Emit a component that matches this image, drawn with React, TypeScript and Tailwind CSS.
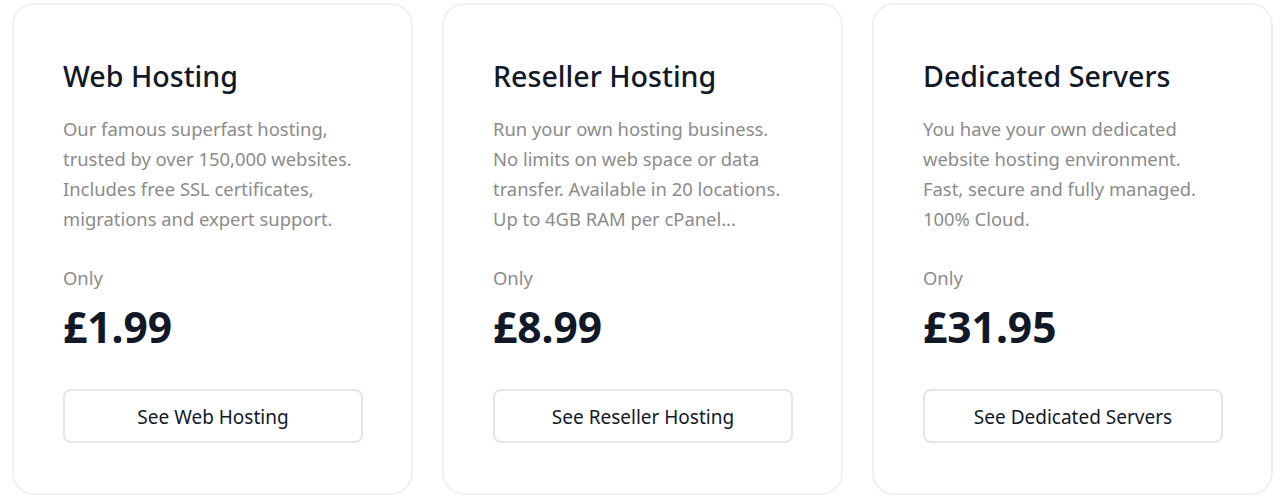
const plans = [
  {
    title: "Web Hosting",
    lines: [
      "Our famous superfast hosting,",
      "trusted by over 150,000 websites.",
      "Includes free SSL certificates,",
      "migrations and expert support.",
    ],
    price: "£1.99",
    cta: "See Web Hosting",
  },
  {
    title: "Reseller Hosting",
    lines: [
      "Run your own hosting business.",
      "No limits on web space or data",
      "transfer. Available in 20 locations.",
      "Up to 4GB RAM per cPanel...",
    ],
    price: "£8.99",
    cta: "See Reseller Hosting",
  },
  {
    title: "Dedicated Servers",
    lines: [
      "You have your own dedicated",
      "website hosting environment.",
      "Fast, secure and fully managed.",
      "100% Cloud.",
    ],
    price: "£31.95",
    cta: "See Dedicated Servers",
  },
];

const App = () => {
  return (
    <div className="min-h-[497px] bg-white pt-[3px] pl-3 pr-[10px] font-['Noto_Sans',sans-serif]">
      <div className="grid grid-cols-3 gap-[29px]">
        {plans.map((plan) => (
          <div
            key={plan.title}
            className="h-[492px] rounded-[22px] border-2 border-[#f0f0f0] px-[49px] pt-[51px]"
          >
            {/* title */}
            <h2 className="text-[28.6px] leading-[40px] font-medium text-[#111827]">
              {plan.title}
            </h2>
            <p className="mt-[18px] text-[18.4px] leading-[30px] text-[#8b8b8b]">
              {plan.lines.map((l) => (
                <span key={l} className="block">
                  {l}
                </span>
              ))}
            </p>
            <p className="mt-[30px] text-[18.4px] leading-[28px] text-[#8b8b8b]">Only</p>
            {/* price */}
            <p className="mt-[10px] text-[42.5px] leading-[50px] font-bold text-[#111827]">
              {plan.price}
            </p>
            <button className="mt-[37px] h-[54px] w-[300px] rounded-[8px] border-2 border-[#e6e6e6] bg-white pt-[2px] text-[19px] text-[#111827]">
              {plan.cta}
            </button>
          </div>
        ))}
      </div>
    </div>
  );
};

export default App;
